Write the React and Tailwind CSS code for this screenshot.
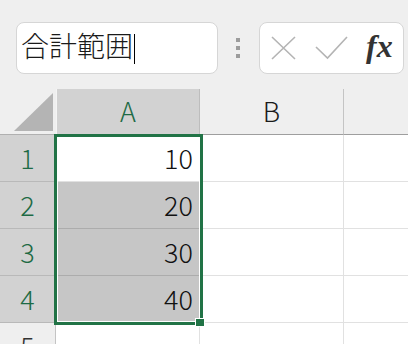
import React from 'react'

const GREEN = '#217346'

const rows = [
  { n: 1, v: '10', sel: true, active: true },
  { n: 2, v: '20', sel: true },
  { n: 3, v: '30', sel: true },
  { n: 4, v: '40', sel: true },
  { n: 5, v: '', sel: false },
]

const App = () => {
  return (
    <div className="w-[408px] h-[344px] overflow-hidden bg-[#efefef] font-['Noto_Sans_CJK_JP',sans-serif]">

      {/* FORMULA BAR */}
      <div className="flex items-start h-[89px] pt-[22px] pl-4">
        <div className="w-[202px] h-[52px] bg-white border border-[#d6d6d6] rounded-[8px] flex items-center pl-1 pb-[6px]">
          <span className="text-[28px] leading-none font-light text-[#1a1a1a] font-['Noto_Sans_CJK_JP',sans-serif]">合計範囲</span>
          <span className="w-px h-[30px] bg-black ml-[1px] mt-[8px]" />
        </div>

        <div className="flex flex-col gap-1 ml-[18px] mt-[16px]">
          <span className="w-1 h-1 bg-[#9c9c9c]" />
          <span className="w-1 h-1 bg-[#9c9c9c]" />
          <span className="w-1 h-1 bg-[#9c9c9c]" />
        </div>

        <div className="ml-[19px] w-[145px] h-[52px] bg-white border border-[#d6d6d6] rounded-[8px] flex items-center pl-[11px]">
          <svg width="25" height="24" viewBox="0 0 25 24" className="shrink-0">
            <path d="M1 1 L24 23 M24 1 L1 23" stroke="#b4b4b4" strokeWidth="1.6" fill="none" />
          </svg>
          <svg width="33" height="24" viewBox="0 0 33 24" className="shrink-0 ml-[19px]">
            <path d="M1 11 L12.5 22 L32 1" stroke="#b4b4b4" strokeWidth="1.6" fill="none" />
          </svg>
          <span className="ml-[18px] text-[32px] leading-none italic font-semibold text-[#333] font-['Liberation_Serif',serif] -mt-[4px]">fx</span>
        </div>
      </div>

      {/* GRID */}
      <div className="relative">
        <div className="grid grid-cols-[56px_144px_144px_64px]">
          {/* header row */}
          <div className="h-[46px] bg-[#efefef] relative border-b border-[#b0b0b0]">
            <svg width="56" height="45" viewBox="0 0 56 45" className="absolute inset-0">
              <polygon points="14,42 53,42 53,4" fill="#b4b4b4" />
            </svg>
          </div>
          <div className="h-[46px] bg-[#d2d2d2] border-l border-[#f4f4f4] border-r border-r-[#bdbdbd] border-b border-b-[#f4f4f4] flex items-center justify-center text-[27px] font-light text-[#1e6b45] font-['Noto_Sans_CJK_JP',sans-serif]">
            A
          </div>
          <div className="h-[46px] bg-[#efefef] border-r border-[#c4c4c4] border-b border-b-[#9e9e9e] flex items-center justify-center text-[27px] font-light text-[#1a1a1a] font-['Noto_Sans_CJK_JP',sans-serif]">
            B
          </div>
          <div className="h-[46px] bg-[#efefef] border-b border-[#9e9e9e]" />

          {rows.map((r) => (
            <React.Fragment key={r.n}>
              <div className={`h-[47px] border-b border-r flex items-center justify-center text-[27px] font-light font-['Noto_Sans_CJK_JP',sans-serif] ${r.sel ? 'bg-[#d2d2d2] border-[#b9b9b9] text-[#1e6b45]' : 'bg-[#efefef] border-[#c4c4c4] text-[#333]'}`}>
                {r.n}
              </div>
              <div className={`h-[47px] border-b border-r flex items-center justify-end pr-[6px] text-[27px] font-light text-[#111] font-['Noto_Sans_CJK_JP',sans-serif] ${r.sel && !r.active ? 'bg-[#c6c6c6] border-[#acacac]' : 'bg-white border-[#e1e1e1]'}`}>
                {r.v}
              </div>
              <div className="h-[47px] bg-white border-b border-r border-[#e1e1e1]" />
              <div className="h-[47px] bg-white border-b border-[#e1e1e1]" />
            </React.Fragment>
          ))}
        </div>

        {/* SELECTION */}
        <div className="absolute left-[54px] top-[45px] w-[149px] h-[191px] border-[3px] border-[#217346] shadow-[inset_0_0_0_1px_white]" />
        <div className="absolute left-[195px] top-[229px] w-[10px] h-[9px] border border-white" style={{ backgroundColor: GREEN }} />
      </div>
    </div>
  )
}

export default App
